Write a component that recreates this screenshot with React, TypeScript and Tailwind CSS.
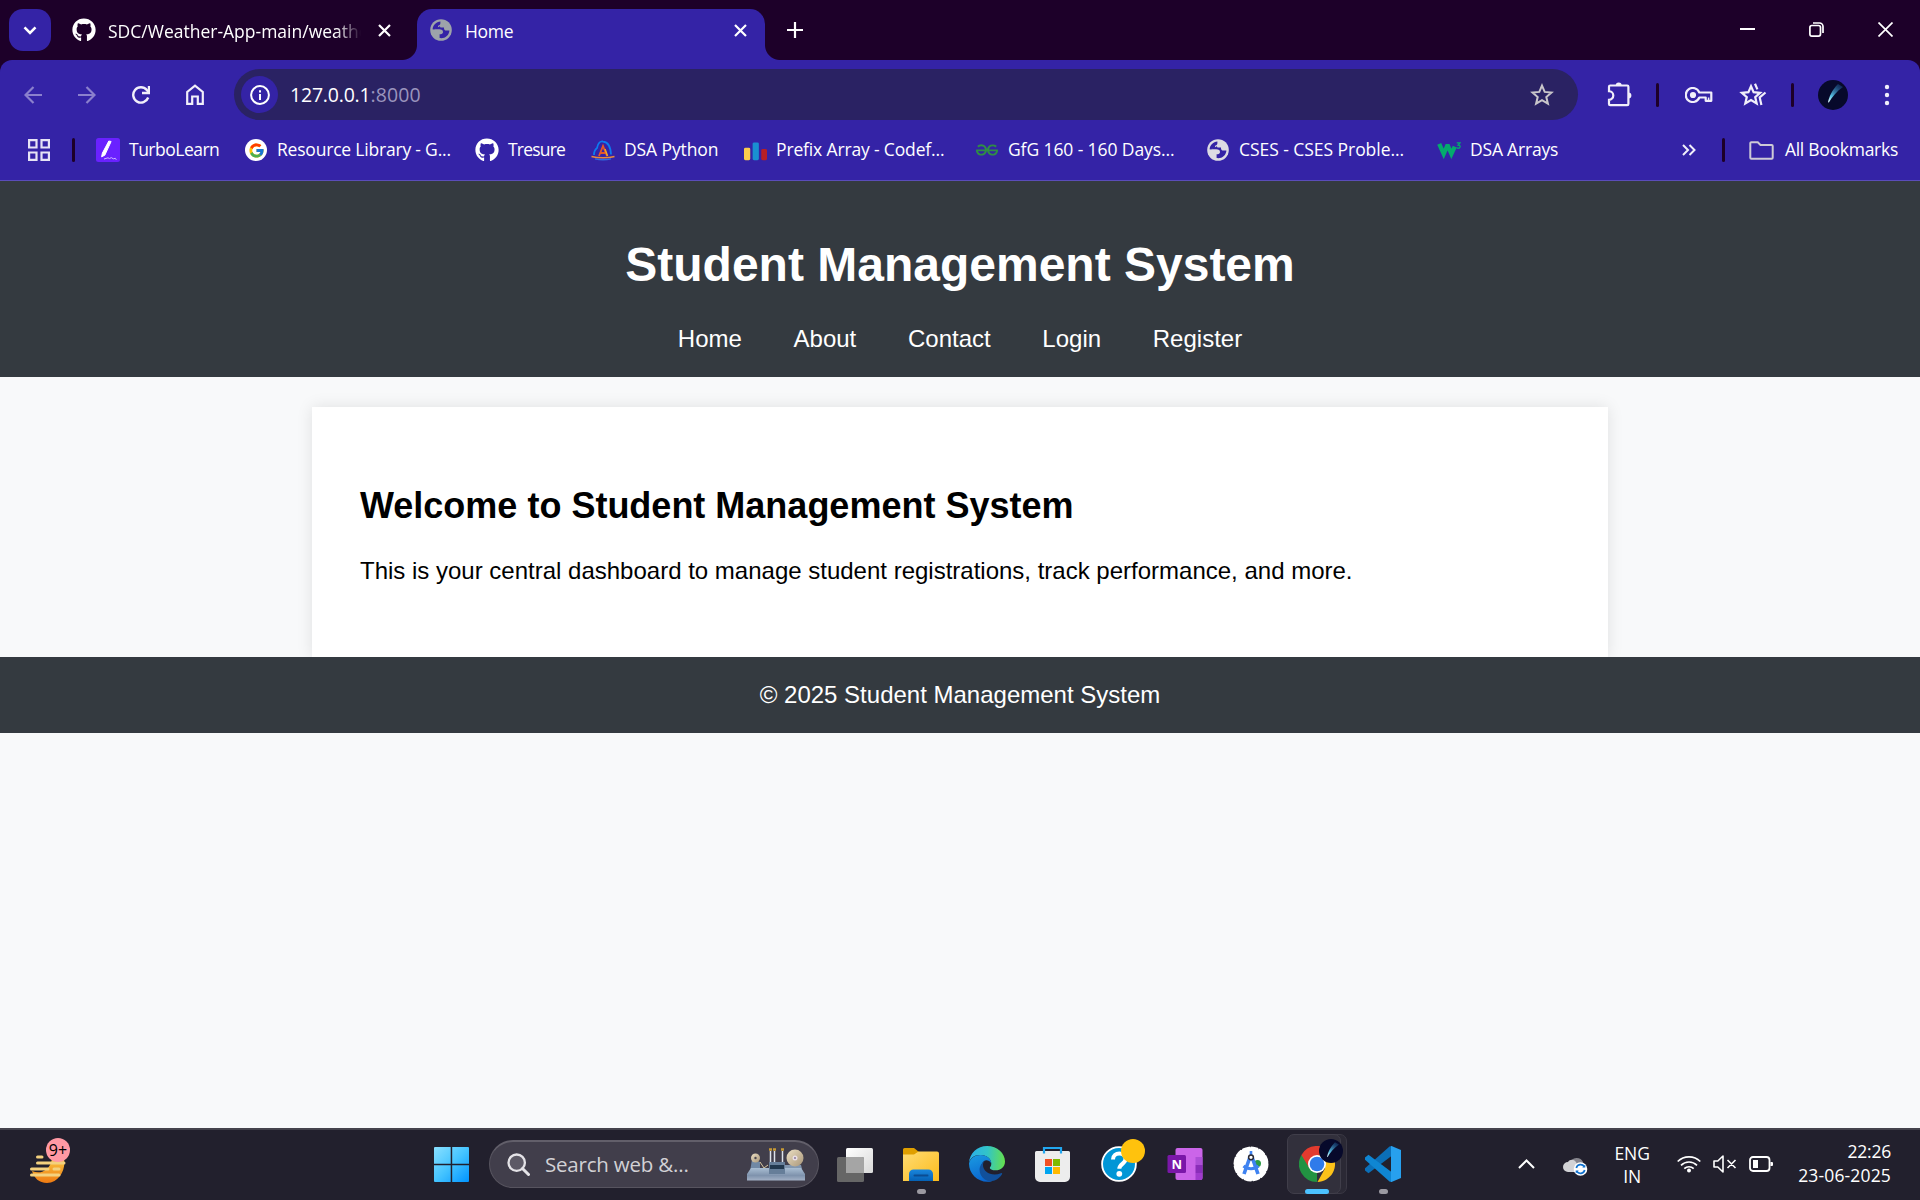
import React from "react";
import { FaGithub } from "react-icons/fa";
import { FcGoogle } from "react-icons/fc";
import { SiGeeksforgeeks } from "react-icons/si";

function Globe({ land, sea }: { land: string; sea: string }) {
  return (
    <svg width="22" height="22" viewBox="0 0 22 22">
      <circle cx="11" cy="11" r="10.8" fill={land} />
      <path d="M2.6 10.2C3 6 6.2 2.8 10.4 2.5v1.8c0 1.4-1.2 2.4-2.4 2.4v1.6c0 .7-.5 1.2-1.2 1.2H5.6c-.6 0-1 .3-1 .7z" fill={sea} />
      <path d="M2.6 10.2h6.600c2.600 0 3.800 1 3.800 2.800 0 1.300-1 2.200-2.200 2.200H9.600v3.900c4.900.9 9.600-2.600 9.800-7.600h-3.200c-1.200 0-2.200-.9-2.200-2.100V8.600h-2.600c-.8 0-1.500-.6-1.500-1.300L8 8.200z" fill={sea} />
    </svg>
  );
}

function Avatar({ size }: { size: number }) {
  return (
    <svg width={size} height={size} viewBox="0 0 30 30">
      <defs>
        <linearGradient id="comet" x1="10" y1="22" x2="24" y2="5" gradientUnits="userSpaceOnUse">
          <stop offset="0" stopColor="#e8ffff" />
          <stop offset=".3" stopColor="#58bfe4" />
          <stop offset="1" stopColor="#164a86" stopOpacity=".4" />
        </linearGradient>
      </defs>
      <circle cx="15" cy="15" r="15" fill="#07092b" />
      <path d="M10 22.500C11 17 14 10 20 4l5 3c-6 4-11 10-14 15.300z" fill="url(#comet)" />
    </svg>
  );
}

const stroke = { fill: "none", strokeWidth: 2.2 } as const;

function CloseIcon() {
  return (
    <svg width="13" height="13" viewBox="0 0 13 13" stroke="#fff" {...stroke}>
      <path d="M1 1l11 11M12 1L1 12" />
    </svg>
  );
}

function TabStrip() {
  return (
    <div className="flex h-[60px] bg-[#1d0029] pl-[9px] text-[17.5px] text-white">
      <div className="mt-[9px] flex h-[42px] w-[42px] items-center justify-center rounded-[14px] bg-[#3423a6]">
        <svg width="14" height="9" viewBox="0 0 14 9" stroke="#fff" {...stroke} strokeWidth={2.6}>
          <path d="M1.500 1.300L7 6.800l5.500-5.500" />
        </svg>
      </div>
      <div className="ml-[21px] flex h-[60px] w-[345px] items-center">
        <FaGithub size={24} />
        <span className="ml-[12px] mt-[2px] w-[265px] whitespace-nowrap [mask-image:linear-gradient(to_right,black_228px,transparent_253px)]">
          SDC/Weather-App-main/weathe
        </span>
        <span className="ml-[5px]">
          <CloseIcon />
        </span>
      </div>
      <div className="relative mt-[9px] flex h-[51px] w-[348px] items-center rounded-t-[15px] bg-[#3423a6] pl-[13px]">
        <div className="absolute -left-[15px] bottom-0 h-[15px] w-[15px] bg-[radial-gradient(circle_at_0_0,transparent_14.5px,#3423a6_15.5px)]" />
        <div className="absolute -right-[15px] bottom-0 h-[15px] w-[15px] bg-[radial-gradient(circle_at_100%_0,transparent_14.5px,#3423a6_15.5px)]" />
        <span className="mb-[9px]">
          <Globe land="#9da3aa" sea="#3423a6" />
        </span>
        <span className="mb-[7px] ml-[13px] w-[269px] tracking-[-0.3px]">Home</span>
        <span className="mb-[9px]">
          <CloseIcon />
        </span>
      </div>
      <svg className="ml-[22px] mt-[22px]" width="16" height="16" viewBox="0 0 16 16" stroke="#fff" {...stroke}>
        <path d="M8 0v16M0 8h16" />
      </svg>
      <div className="ml-auto mr-[27px] flex h-[58px] items-center gap-[54px]">
        <svg width="15" height="16" viewBox="0 0 15 16" stroke="#fff" {...stroke} strokeWidth={2}>
          <path d="M0 8h15" />
        </svg>
        <svg width="15" height="15" viewBox="0 0 15 15" stroke="#fff" {...stroke} strokeWidth={1.7}>
          <rect x=".9" y="3.5" width="10.6" height="10.6" rx="2" />
          <path d="M4 1h6.500a3.500 3.500 0 0 1 3.500 3.500V11" />
        </svg>
        <svg width="15" height="15" viewBox="0 0 15 15" stroke="#fff" {...stroke} strokeWidth={1.7}>
          <path d="M.5.5l14 14M14.500.5l-14 14" />
        </svg>
      </div>
    </div>
  );
}

function Divider() {
  return <div className="h-[24px] w-[3px] rounded-full bg-[#1d0029]" />;
}

function Toolbar() {
  return (
    <div className="flex h-[60px] items-center pl-[24px] pt-[9px] text-[19.5px]">
      <div className="flex w-[210px] items-center gap-[36px]">
        <svg width="18" height="18" viewBox="0 0 18 18" stroke="#8b80cd" {...stroke}>
          <path d="M18 9H2M9.500 1L1.500 9l8 8" />
        </svg>
        <svg width="18" height="18" viewBox="0 0 18 18" stroke="#8b80cd" {...stroke}>
          <path d="M0 9h16M8.500 1l8 8-8 8" />
        </svg>
        <svg width="18" height="18" viewBox="0 0 18 18" stroke="#f1effa" {...stroke} strokeWidth={2.4}>
          <path d="M16.200 11.500A7.700 7.700 0 1 1 14.800 3.900L16.500 6" />
          <path d="M17 0v7h-7" />
        </svg>
        <svg width="18" height="21" viewBox="0 0 18 21" stroke="#f1effa" {...stroke}>
          <path d="M1.200 19.800V8L9 1.700 16.800 8v11.800h-5v-7.300H6.200v7.300z" />
        </svg>
      </div>
      <div className="flex h-[51px] w-[1344px] items-center rounded-full bg-[#2a2263] pl-[7px] pr-[24px]">
        <div className="flex h-[37px] w-[37px] items-center justify-center rounded-full bg-[#3423a6]">
          <svg width="20" height="20" viewBox="0 0 20 20" stroke="#fff" {...stroke} strokeWidth={2}>
            <circle cx="10" cy="10" r="8.9" />
            <path d="M10 9v6M10 5.200v2.200" />
          </svg>
        </div>
        <span className="ml-[12px] tracking-[-0.2px] text-white">127.0.0.1</span>
        <span className="tracking-[0.1px] text-[#9a94bd]">:8000</span>
        <svg className="ml-auto" width="24" height="23" viewBox="0 0 24 23" stroke="#c9c6ca" {...stroke} strokeWidth={2}>
          <path d="M12 2.600l2.700 6.300 6.800.6-5.200 4.500 1.600 6.700-5.900-3.600-5.900 3.600 1.600-6.700L2.500 9.500l6.800-.6z" />
        </svg>
      </div>
      <div className="ml-[29px] flex items-center">
        <svg width="25" height="25" viewBox="0 0 25 25" stroke="#f1effa" {...stroke}>
          <path d="M3.200 3.500h17a1.200 1.200 0 0 1 1.200 1.200V22a1.200 1.200 0 0 1-1.200 1.200H3.200A1.200 1.200 0 0 1 2 22v-4.200a3.900 3.900 0 0 0 0-8.600V4.700a1.200 1.200 0 0 1 1.200-1.200z" />
          <path d="M8.700 3.500a3 3 0 0 1 6 0zM21.400 10.500a3 3 0 0 1 0 6z" fill="#f1effa" stroke="none" />
        </svg>
        <span className="ml-[24px]">
          <Divider />
        </span>
        <svg className="ml-[26px]" width="28" height="16" viewBox="0 0 28 16" stroke="#f1effa" {...stroke}>
          <path d="M14.300 5.500h12v8.300h-5.600V10.500h-6.400A7 7 0 1 1 14.300 5.500z" strokeLinejoin="round" />
          <circle cx="8" cy="8" r="3.1" fill="#f1effa" stroke="none" />
          <path d="M23.600 10.500v3" strokeWidth={1.5} />
        </svg>
        <svg className="ml-[26px]" width="28" height="24" viewBox="0 0 28 24" stroke="#f1effa" {...stroke}>
          <path d="M12 3.200l2.600 6 6.500.6-4.900 4.300 1.500 6.400-5.700-3.400-5.700 3.400 1.500-6.400L2.900 9.800l6.500-.6z" />
          <path d="M16 .8l2.400 5.600M26.500 9.500l-5.800 5 1.700 7.500" />
        </svg>
        <span className="ml-[24px]">
          <Divider />
        </span>
        <span className="ml-[24px]">
          <Avatar size={30} />
        </span>
        <svg className="ml-[36px]" width="6" height="22" viewBox="0 0 6 22" fill="#f1effa">
          <circle cx="3" cy="3" r="2.2" />
          <circle cx="3" cy="11" r="2.2" />
          <circle cx="3" cy="19" r="2.2" />
        </svg>
      </div>
    </div>
  );
}

function Bookmark({ icon, label, className }: { icon: React.ReactNode; label: string; className: string }) {
  return (
    <div className={`flex items-center whitespace-nowrap ${className}`}>
      <span className="flex w-[24px] justify-center">{icon}</span>
      <span className="-mt-px ml-[9px]">{label}</span>
    </div>
  );
}

function BookmarksBar() {
  return (
    <div className="flex h-[61px] items-center border-b border-[#5a4cba] pl-[28px] pr-[22px] text-[17.5px] text-white">
      <svg width="22" height="22" viewBox="0 0 22 22" stroke="#e6e3f5" {...stroke}>
        <path d="M1.100 1.100h7.400v7.400H1.100zM13.500 1.100h7.400v7.400h-7.400zM1.100 13.500h7.400v7.400H1.100zM13.500 13.500h7.400v7.400h-7.400z" />
      </svg>
      <span className="ml-[22px] mr-[21px]">
        <Divider />
      </span>
      <Bookmark
        className="w-[148px] tracking-[-0.5px]"
        label="TurboLearn"
        icon={
          <svg width="24" height="24" viewBox="0 0 24 24">
            <rect width="24" height="24" rx="2.5" fill="#6a21ff" />
            <path d="M12.800 3l2.300.5-6.300 13.700-3.200 1.600.8-3.700z" fill="#fff" stroke="#fff" strokeLinejoin="round" />
            <path d="M8 21l4-1.200 1.500.8 1.800-1 2 1.200 2-.5 1 1.500" stroke="#cdb4ff" fill="none" />
          </svg>
        }
      />
      <Bookmark
        className="w-[231px] tracking-[-0.2px]"
        label="Resource Library - G..."
        icon={
          <span className="flex h-[22px] w-[22px] items-center justify-center rounded-full bg-white">
            <FcGoogle size={17} />
          </span>
        }
      />
      <Bookmark className="w-[116px] tracking-[-0.8px]" label="Tresure" icon={<FaGithub size={24} />} />
      <Bookmark
        className="w-[152px] tracking-[-0.1px]"
        label="DSA Python"
        icon={
          <svg width="24" height="21" viewBox="0 0 24 21" fill="none">
            <path d="M3 15c0-4 1-5.500 3-7 1-5 3.500-7 6-6.500 5 .5 7.500 5 8 13" stroke="#0c7bf0" strokeWidth="1.8" />
            <path d="M8 16l4-10 4 10M9.500 13h5" stroke="#e4572a" strokeWidth="1.800" />
            <path d="M14 9l2.500 7" stroke="#f5a623" strokeWidth="1.500" />
            <path d="M.5 16.500c6 1.800 17 1.800 23 0" stroke="#e98a3c" strokeWidth="1.500" />
            <path d="M4 18.800c5 1.200 11 1.200 16 0" stroke="#2f6be0" strokeWidth="1.300" />
          </svg>
        }
      />
      <Bookmark
        className="w-[232px] tracking-[-0.15px]"
        label="Prefix Array - Codef..."
        icon={
          <svg className="ml-px mt-[2px]" width="24" height="19" viewBox="0 0 24 19">
            <rect y="5.500" width="6.500" height="13" rx="1.500" fill="#fbcb4d" />
            <rect x="9" width="6.500" height="18.500" rx="1.500" fill="#1a8fd1" />
            <rect x="18" y="7" width="6" height="11.500" rx="1.500" fill="#b71f26" />
          </svg>
        }
      />
      <Bookmark
        className="w-[231px] tracking-[-0.1px]"
        label="GfG 160 - 160 Days..."
        icon={<SiGeeksforgeeks className="text-[#2f8d46]" size={22} />}
      />
      <Bookmark className="w-[231px] tracking-[-0.05px]" label="CSES - CSES Proble..." icon={<Globe land="#dcdbe3" sea="#3423a6" />} />
      <Bookmark
        className="tracking-[-0.2px]"
        label="DSA Arrays"
        icon={
          <svg width="25" height="18" viewBox="0 0 25 18" fill="none" stroke="#04aa6d">
            <path d="M2.300 2.500L7 13l3.500-8h1L15 13l3.500-7.500" strokeWidth="4.500" />
            <path d="M20.500 1.500H24l-2 2.300c3 0 2.600 3.400 0 3.400l-1.700-.6" strokeWidth="1.300" />
          </svg>
        }
      />
      <svg className="ml-auto" width="14" height="12" viewBox="0 0 14 12" stroke="#f1effa" {...stroke} strokeWidth={2}>
        <path d="M1 1l5 5-5 5M7.500 1l5 5-5 5" />
      </svg>
      <span className="ml-[26px] mr-[24px]">
        <Divider />
      </span>
      <svg width="25" height="19" viewBox="0 0 25 19" stroke="#cdcad6" {...stroke} strokeWidth={2}>
        <path d="M2.300 1.200h6.500l2.700 2.700h11.200a1 1 0 0 1 1 1v11.800a1 1 0 0 1-1 1H2.300a1 1 0 0 1-1-1V2.200a1 1 0 0 1 1-1z" />
      </svg>
      <span className="-mt-px ml-[11px] tracking-[-0.27px]">All Bookmarks</span>
    </div>
  );
}

function StudentPage() {
  return (
    <div className="h-[947px] bg-[#f8f9fa] font-['Liberation_Sans',Arial,sans-serif] text-[24px] leading-[27px] text-black">
      <header className="h-[196px] bg-[#343a40] pt-[56px] text-center text-white">
        <h1 className="text-[48px] font-bold leading-[55px]">Student Management System</h1>
        <nav className="mt-[33px] flex justify-center gap-[51.7px]">
          {["Home", "About", "Contact", "Login", "Register"].map((item) => (
            <a key={item}>{item}</a>
          ))}
        </nav>
      </header>
      <main className="mx-auto mt-[30px] h-[250px] w-[1296px] bg-white px-[48px] pt-[78px] shadow-[0_0_15px_rgba(0,0,0,0.1)]">
        <h2 className="text-[36px] font-bold leading-[41px]">Welcome to Student Management System</h2>
        <p className="mt-[31px]">This is your central dashboard to manage student registrations, track performance, and more.</p>
      </main>
      <footer className="relative h-[76px] bg-[#343a40] pt-[24px] text-center text-white">© 2025 Student Management System</footer>
    </div>
  );
}

function TaskSlot({ children, dot }: { children: React.ReactNode; dot?: boolean }) {
  return (
    <div className="relative flex h-[70px] w-[66px] items-center justify-center">
      {children}
      {dot && <div className="absolute bottom-[5px] h-[5px] w-[9px] rounded-full bg-[#9b99a1]" />}
    </div>
  );
}

function SearchArt() {
  return (
    <svg width="58" height="33" viewBox="0 0 58 33">
      <defs>
        <linearGradient id="steel" x1="0" y1="0" x2="0" y2="1">
          <stop offset="0" stopColor="#a9bed3" />
          <stop offset=".6" stopColor="#7f93ad" />
          <stop offset="1" stopColor="#a3b1c6" />
        </linearGradient>
        <linearGradient id="brass" x1="0" y1="0" x2="1" y2="1">
          <stop offset="0" stopColor="#ece0c4" />
          <stop offset="1" stopColor="#a99679" />
        </linearGradient>
      </defs>
      <path d="M5 11l8 3v10H3z" fill="#7189a5" />
      <path d="M13 14l4 6 4-3M38 14l-4 4" stroke="#d8c8a2" fill="none" />
      <path d="M23.500 3v13M27.500 3v13M35.500 3v13" stroke="#dfe3ea" strokeWidth="1.500" />
      <path d="M22 1.500h3M26 1.500h3M34 1.500h3" stroke="#c79b36" strokeWidth="2.500" />
      <path d="M38 17h16l2 8H38z" fill="#8297b0" />
      <path d="M4 20h50l4 6v6.500H0V26z" fill="url(#steel)" />
      <rect x="22" y="14" width="16" height="12" fill="#667e99" />
      <rect x="23" y="17" width="14" height="4" fill="#22384e" />
      <circle cx="8.500" cy="10" r="4.500" fill="url(#brass)" />
      <circle cx="8.500" cy="10" r="1.200" fill="#4a4650" />
      <circle cx="48" cy="10" r="8.500" fill="url(#brass)" />
      <circle cx="48" cy="10" r="2.500" fill="#e9dfe5" />
      <circle cx="48" cy="10" r="1" fill="#8a7a9a" />
    </svg>
  );
}

function Taskbar() {
  return (
    <div className="flex h-[72px] items-center border-t-2 border-[#45434c] bg-[#22202d] pb-[2px] text-white">
      <div className="relative ml-[30px] flex h-[70px] w-[404px] items-center">
        <svg className="mt-[8px]" width="38" height="34" viewBox="0 0 38 34">
          <defs>
            <linearGradient id="moon" x1="0" y1="0" x2="0" y2="1">
              <stop offset="0" stopColor="#f9c440" />
              <stop offset="1" stopColor="#ee7a12" />
            </linearGradient>
          </defs>
          <path d="M2 20c9 4 18-1 20-12h12c2 12-6 24-17 24C9 32 4 27 2 20z" fill="url(#moon)" />
          <path d="M7.500 6h4.500M7.500 12H34M1.500 18H18M24 18h5M1.500 24H29" stroke="#f3d17f" strokeWidth="3" strokeLinecap="round" />
        </svg>
        <div className="absolute left-[16px] top-[9px] flex h-[24px] w-[24px] items-center justify-center rounded-full bg-[#ff99a4] text-[16px] leading-none text-black">
          9+
        </div>
      </div>
      <svg width="35" height="35" viewBox="0 0 35 35">
        <defs>
          <linearGradient id="win" x1="0" y1="0" x2="1" y2="1">
            <stop offset="0" stopColor="#8ae0ff" />
            <stop offset=".5" stopColor="#45c4ff" />
            <stop offset="1" stopColor="#0094ff" />
          </linearGradient>
        </defs>
        <path d="M1 0h15.700v16.700H0V1a1 1 0 0 1 1-1zM18.200 0H34a1 1 0 0 1 1 1v15.700H18.200zM0 18.200h16.700V35H1a1 1 0 0 1-1-1zM18.200 18.200H35V34a1 1 0 0 1-1 1H18.200z" fill="url(#win)" />
      </svg>
      <div className="ml-[20px] mr-[3px] flex h-[48px] w-[330px] items-center rounded-full border border-t-2 border-[#57545f] border-t-[#625f6a] bg-[#413e4b] pl-[17px] pr-[13px]">
        <svg width="23" height="23" viewBox="0 0 23 23" fill="#5c5965" stroke="#e4e3e7">
          <circle cx="9.700" cy="9.700" r="8.200" strokeWidth="2.300" />
          <path d="M15.500 15.500l6 6" strokeWidth="3" strokeLinecap="round" />
        </svg>
        <span className="ml-[15px] text-[20.5px] tracking-[-0.2px] text-[#d2d1d5]">Search web &amp;...</span>
        <span className="ml-auto">
          <SearchArt />
        </span>
      </div>
      <TaskSlot>
        <svg width="36" height="35" viewBox="0 0 36 35">
          <defs>
            <linearGradient id="pane" x1="0" y1="0" x2="1" y2="1">
              <stop offset="0" stopColor="#fff" />
              <stop offset="1" stopColor="#d9d9d9" />
            </linearGradient>
          </defs>
          <rect x="9" y="1" width="27" height="25" rx="1.500" fill="url(#pane)" />
          <rect y="10" width="27" height="25" rx="1.500" fill="#666" />
          <path d="M9 10h16.500a1.500 1.500 0 0 1 1.500 1.500V26H9z" fill="#a5a5a5" />
        </svg>
      </TaskSlot>
      <TaskSlot dot>
        <svg width="36" height="33" viewBox="0 0 36 33">
          <defs>
            <linearGradient id="folder" x1="0" y1="0" x2="1" y2="1">
              <stop offset="0" stopColor="#ffdc73" />
              <stop offset="1" stopColor="#fcbb1c" />
            </linearGradient>
            <linearGradient id="folderBlue" x1="0" y1="0" x2="0" y2="1">
              <stop offset="0" stopColor="#1a86dc" />
              <stop offset="1" stopColor="#0561b5" />
            </linearGradient>
          </defs>
          <path d="M0 1.500A1.500 1.500 0 0 1 1.500 0H11l5 4v5H0z" fill="#e09f00" />
          <path d="M0 6.500h11l4.500-3H34A2 2 0 0 1 36 5.500V33H0z" fill="url(#folder)" />
          <path d="M6 33v-7a4.500 4.500 0 0 1 4.500-4.500h15A4.500 4.500 0 0 1 30 26v7z" fill="url(#folderBlue)" />
          <path d="M11.500 27.500h13" stroke="#0b4c92" strokeWidth="2" strokeLinecap="round" />
        </svg>
      </TaskSlot>
      <TaskSlot>
        <svg width="36" height="36" viewBox="0 0 36 36">
          <defs>
            <linearGradient id="edgeTop" x1="0" y1="12" x2="36" y2="14" gradientUnits="userSpaceOnUse">
              <stop offset="0" stopColor="#2bafea" />
              <stop offset=".5" stopColor="#32c4c8" />
              <stop offset="1" stopColor="#65e04c" />
            </linearGradient>
            <linearGradient id="edgeLeft" x1="0" y1="8" x2="10" y2="36" gradientUnits="userSpaceOnUse">
              <stop offset="0" stopColor="#1b9de2" />
              <stop offset="1" stopColor="#0a66cf" />
            </linearGradient>
          </defs>
          <path d="M0 17C.5 7 8.500 0 18 0c10.500 0 18 7.500 18 15.500 0 5.500-4.500 8.800-9.200 8.800-4 0-6-1.300-6-2.400 0-.9 1.500-1.600 1.500-4.200C22.300 12 17 9 11 9 5 9 1 12.500 0 17z" fill="url(#edgeTop)" />
          <path d="M0 17.500C1 12 6 8.900 11.500 8.900c6.500 0 10.800 3.800 10.800 8.600-1.500-3-5-4-7.300-2.500-5 3.500-3.500 17 8 20.200C11 38 0 29.500 0 17.500z" fill="url(#edgeLeft)" />
          <path d="M17 14.300c-8 3.700-8.500 14-1.500 19 5 3.700 13 2.200 17.500-5 .6-1-.3-1.600-1.200-1.100C23 31 13.500 26 14 18.500c.1-2 1.300-3.500 3-4.200z" fill="#11509b" />
        </svg>
      </TaskSlot>
      <TaskSlot>
        <svg className="mr-px" width="35" height="36" viewBox="0 0 35 36">
          <path d="M1.500 5h32A1.500 1.500 0 0 1 35 6.500V31a5 5 0 0 1-5 5H5a5 5 0 0 1-5-5V6.500A1.500 1.500 0 0 1 1.500 5z" fill="#ededed" />
          <path d="M9 7.500V2h17v5.500" stroke="#22a7f0" strokeWidth="2.200" fill="none" />
          <rect x="10" y="13" width="7" height="7" fill="#f25022" />
          <rect x="18" y="13" width="7" height="7" fill="#7fba00" />
          <rect x="10" y="21" width="7" height="7" fill="#00a4ef" />
          <rect x="18" y="21" width="7" height="7" fill="#ffb900" />
        </svg>
      </TaskSlot>
      <TaskSlot>
        <svg width="36" height="36" viewBox="0 0 36 36">
          <circle cx="18" cy="18" r="16.900" fill="#0096d6" stroke="#fff" strokeWidth="1.800" />
          <path d="M12 13.500c0-4 3-6 6.300-6 3.500 0 6.200 2 6.200 5.500 0 4.700-6.200 5-6.200 9.800" stroke="#fff" strokeWidth="4" fill="none" />
          <circle cx="18.300" cy="27.800" r="2.900" fill="#fff" />
        </svg>
        <div className="absolute right-[7px] top-[10px] h-[24px] w-[24px] rounded-full bg-[#ffc20d]" />
      </TaskSlot>
      <TaskSlot>
        <svg width="36" height="32" viewBox="0 0 36 32">
          <rect x="8.500" width="27" height="32" rx="2" fill="#cb65e9" />
          <path d="M28.500 9h7v8h-7z" fill="#ad4fd6" />
          <path d="M28.500 17h7v8h-7z" fill="#8a2db9" />
          <path d="M28.500 25h7v5a2 2 0 0 1-2 2h-5z" fill="#a03bcd" />
          <rect x=".5" y="7" width="18.500" height="18" rx="1.500" fill="#7a17a8" />
          <text x="9.700" y="20.700" fontFamily="Open Sans, sans-serif" fontWeight="700" fontSize="13" fill="#fff" textAnchor="middle">N</text>
        </svg>
      </TaskSlot>
      <TaskSlot>
        <svg width="36" height="36" viewBox="0 0 36 36">
          <circle cx="18" cy="18" r="16.500" fill="#fff" />
          <circle cx="18" cy="18" r="16.300" fill="none" stroke="#fff" strokeWidth="2.400" strokeDasharray="6 2.530" strokeLinecap="round" />
          <circle cx="24.500" cy="17.500" r="3.500" fill="#2c9b46" />
          <path d="M17 11l-6 17M19 11l6 17" stroke="#3f83f1" strokeWidth="3.600" />
          <path d="M10.500 20c4 3.500 11 3.500 15 0" stroke="#3f83f1" strokeWidth="3" fill="none" />
          <path d="M16.700 5h2.600v5h-2.600z" fill="#3f83f1" />
          <circle cx="18" cy="11.300" r="2.400" fill="#fff" stroke="#2a2a36" strokeWidth="1.500" />
        </svg>
      </TaskSlot>
      <TaskSlot>
        <div className="absolute left-[18px] top-[5px] h-[60px] w-[45px] rounded-[7px] border border-[#3a3844] bg-[#2b2935]" />
        <div className="absolute left-[3px] top-[5px] h-[60px] w-[54px] rounded-[7px] border border-[#403e4a] bg-[#32303c]" />
        <svg className="relative" width="36" height="36" viewBox="0 0 36 36">
          <path d="M18 18v18A18 18 0 0 1 2.400 9z" fill="#229342" />
          <path d="M18 9.300h15.800A18 18 0 0 1 18.500 36l7.500-13.500z" fill="#fcc219" />
          <path d="M18 9.300h15.800A18 18 0 0 0 2.400 9l8 13.200z" fill="#e33b2e" />
          <circle cx="18" cy="18" r="9" fill="#fff" />
          <circle cx="18" cy="18" r="7.300" fill="#2f7bea" />
        </svg>
        <div className="absolute right-[7px] top-[10px] flex">
          <Avatar size={24} />
        </div>
        <div className="absolute bottom-[5px] left-[21px] h-[5px] w-[24px] rounded-full bg-[#4cc2ff]" />
      </TaskSlot>
      <TaskSlot dot>
        <svg width="36" height="36" viewBox="0 0 36 36">
          <path d="M26.500 0v10L3.500 27.300 0 24.500v-2.200L24.500.5z" fill="#0b6fb8" />
          <path d="M26.500 36V26L3.500 8.700 0 11.500v2.200l24.500 21.800z" fill="#0f86d3" />
          <path d="M26.500 0L36 4v28l-9.500 4c-.7 0-.5-.5-.5-1V1c0-.5 0-1 .5-1z" fill="#27a0ee" />
        </svg>
      </TaskSlot>
      <div className="ml-auto mr-[29px] flex items-center text-[17.5px] leading-[23px]">
        <svg width="17" height="10" viewBox="0 0 17 10" stroke="#fff" {...stroke} strokeWidth={2}>
          <path d="M1 9l7.500-7.500L16 9" />
        </svg>
        <svg className="ml-[28px] mt-[3px]" width="25" height="20" viewBox="0 0 25 20">
          <path d="M7 7a7 7 0 0 1 13-1l-3 8H9z" fill="#85848c" />
          <path d="M5 16a5 5 0 0 1 0-10c2-3 6.500-3 8.500 1L18 16z" fill="#d2d2d5" />
          <circle cx="17.500" cy="13" r="6.800" fill="#fff" />
          <path d="M13.300 12a4.400 4.400 0 0 1 8-1.300M21.700 14a4.400 4.400 0 0 1-8 1.300" stroke="#1172cf" strokeWidth="1.700" fill="none" />
          <path d="M22.300 8.500v3h-3zM12.700 17.500v-3h3z" fill="#1172cf" />
        </svg>
        <div className="ml-[24px] mt-px w-[40px] text-center">
          <div>ENG</div>
          <div>IN</div>
        </div>
        <svg className="ml-[25px]" width="24" height="18" viewBox="0 0 24 18" stroke="#fff" {...stroke} strokeWidth={1.7}>
          <path d="M.7 6.500a16 16 0 0 1 22.600 0M4 10.300a11.300 11.300 0 0 1 16 0M7.300 13.700a6.600 6.600 0 0 1 9.400 0" />
          <circle cx="12" cy="15.500" r="2" fill="#fff" stroke="none" />
        </svg>
        <svg className="ml-[12px]" width="24" height="18" viewBox="0 0 24 18" stroke="#fff" {...stroke} strokeWidth={1.6}>
          <path d="M1 6h3.800L10 1v16l-5.200-5H1zM14.500 5l8 8M22.500 5l-8 8" strokeLinejoin="round" />
        </svg>
        <svg className="ml-[12px]" width="25" height="16" viewBox="0 0 25 16" stroke="#fff" {...stroke} strokeWidth={1.8}>
          <rect x="1" y="1" width="19.500" height="14" rx="3" />
          <rect x="4" y="4" width="5" height="8" fill="#fff" stroke="none" />
          <path d="M21.500 6h1.500a1 1 0 0 1 1 1v2a1 1 0 0 1-1 1h-1.500z" fill="#fff" stroke="none" />
        </svg>
        <div className="-mt-[2px] ml-[24px] text-right leading-[24px]">
          <div className="tracking-[-0.2px]">22:26</div>
          <div className="tracking-[0.15px]">23-06-2025</div>
        </div>
      </div>
    </div>
  );
}

export default function App() {
  return (
    <div className="h-[1200px] w-[1920px] overflow-hidden bg-[#1d0029] font-['Open_Sans','Noto_Sans',sans-serif]">
      <TabStrip />
      <div className="rounded-t-[12px] bg-[#3423a6]">
        <Toolbar />
        <BookmarksBar />
      </div>
      <StudentPage />
      <Taskbar />
    </div>
  );
}
